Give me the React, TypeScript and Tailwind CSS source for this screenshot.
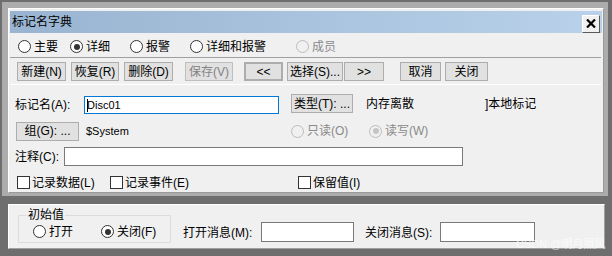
import React from 'react';

// little win32-style pieces
function Radio({ checked = false, disabled = false }: { checked?: boolean; disabled?: boolean }) {
  return (
    <span
      className={
        'flex h-[13px] w-[13px] shrink-0 items-center justify-center rounded-full border ' +
        (disabled ? 'border-[#bcbcbc] bg-[#f0f0f0]' : 'border-[#333333] bg-white')
      }
    >
      {checked && (
        <span className={'h-[6px] w-[6px] rounded-full ' + (disabled ? 'bg-[#c4c4c4]' : 'bg-[#333333]')} />
      )}
    </span>
  );
}

function RadioItem({ label, w, checked, disabled }: { label: string; w: string; checked?: boolean; disabled?: boolean }) {
  return (
    <div className={'flex items-center gap-[3px] ' + w}>
      <Radio checked={checked} disabled={disabled} />
      <span className={disabled ? 'text-[#8a8a8a]' : ''}>{label}</span>
    </div>
  );
}

function Check({ label, w }: { label: string; w: string }) {
  return (
    <div className={'flex items-center gap-[2px] ' + w}>
      <span className="h-[13px] w-[13px] shrink-0 border border-[#333333] bg-white" />
      <span>{label}</span>
    </div>
  );
}

function Btn({ children, className = '' }: { children: React.ReactNode; className?: string }) {
  return (
    <div
      className={
        'flex h-[19px] shrink-0 items-center justify-center border border-[#adadad] bg-[#e1e1e1] ' + className
      }
    >
      {children}
    </div>
  );
}

export default function App() {
  return (
    <div className="relative h-[256px] w-[612px] overflow-hidden bg-[#6e6e6e] pl-[2px] pt-[2px] font-[family-name:'Liberation_Sans','Noto_Sans_CJK_SC',sans-serif] text-[12px] leading-[14px] text-black">
      {/* dialog window */}
      <div className="w-[606px] bg-[#acacac] pb-[3px] pl-[6px] pr-[4px] pt-[6px]">
        <div className="border-x border-b border-t border-b-[#9a9a9a] border-l-white border-r-[#9a9a9a] border-t-white bg-[#f0f0f0] px-px pt-[2px]">
          {/* title bar */}
          <div className="flex h-[22px] items-center justify-between bg-gradient-to-r from-[#99b4d1] to-[#b9d1ea] pl-[2px] pr-[2px]">
            <span>标记名字典</span>
            <div className="mt-[3px] flex h-[18px] w-[18px] items-center justify-center border border-b-[#5a5a5a] border-l-white border-r-[#5a5a5a] border-t-white bg-[#f0f0f0]">
              <svg width="10" height="9" viewBox="0 0 10 9">
                <path d="M1 0.5 L9 8.5 M9 0.5 L1 8.5" stroke="#000" strokeWidth="2.2" />
              </svg>
            </div>
          </div>

          {/* body */}
          <div className="flex h-[159px] flex-col">
            <div className="mt-[7px] flex h-[13px] items-center pl-[8px]">
              <RadioItem label="主要" w="w-[52px]" />
              <RadioItem label="详细" w="w-[60px]" checked />
              <RadioItem label="报警" w="w-[60px]" />
              <RadioItem label="详细和报警" w="w-[106px]" />
              <RadioItem label="成员" w="w-[60px]" disabled />
            </div>

            <div className="mt-[4px] flex w-[591px] border-b border-t border-b-white border-t-[#a0a0a0] pb-[3px] pl-[7px] pt-[4px]">
              <Btn className="w-[49px]">新建(N)</Btn>
              <Btn className="ml-[5px] w-[48px]">恢复(R)</Btn>
              <Btn className="ml-[5px] w-[49px]">删除(D)</Btn>
              <Btn className="ml-[12px] w-[48px] border-[#bfbfbf] bg-[#cccccc] text-[#838383]">保存(V)</Btn>
              <Btn className="ml-[11px] w-[39px] border-2 border-[#0078d7]">&lt;&lt;</Btn>
              <Btn className="ml-[4px] w-[56px]">选择(S)...</Btn>
              <Btn className="ml-[1px] w-[40px]">&gt;&gt;</Btn>
              <Btn className="ml-[16px] w-[41px]">取消</Btn>
              <Btn className="ml-[4px] w-[43px]">关闭</Btn>
            </div>

            <div className="mt-[9px] flex h-[20px] items-start pl-[5px]">
              <span className="mt-[4px] w-[69px]">标记名(A):</span>
              <div className="mt-[2px] flex h-[18px] w-[195px] items-center border border-[#0078d7] bg-white pl-[2px]">
                <span className="mr-[-1px] h-[13px] w-px bg-black" />
                <span className="text-[11px]">Disc01</span>
              </div>
              <Btn className="ml-[12px] h-[18px] w-[62px]">类型(T): ...</Btn>
              <span className="ml-[13px] mt-[3px] w-[119px]">内存离散</span>
              <span className="mt-[3px]">]本地标记</span>
            </div>

            <div className="mt-[8px] flex h-[18px] items-center pl-[6px]">
              <Btn className="h-[18px] w-[63px]">组(G): ...</Btn>
              <span className="ml-[7px] w-[205px] text-[11px]">$System</span>
              <RadioItem label="只读(O)" w="w-[78px]" disabled />
              <RadioItem label="读写(W)" w="w-[80px]" checked disabled />
            </div>

            <div className="mt-[7px] flex h-[19px] items-center pl-[5px]">
              <span className="w-[49px]">注释(C):</span>
              <div className="h-[19px] w-[399px] border border-[#7a7a7a] bg-white" />
            </div>

            <div className="mt-[10px] flex h-[13px] items-center pl-[7px]">
              <Check label="记录数据(L)" w="w-[93px]" />
              <Check label="记录事件(E)" w="w-[188px]" />
              <Check label="保留值(I)" w="w-[80px]" />
            </div>
          </div>
        </div>
      </div>

      {/* lower panel */}
      <div className="ml-[6px] mt-[8px] flex h-[45px] w-[597px] items-start border border-b-[#a0a0a0] border-l-white border-r-[#a0a0a0] border-t-white bg-[#f0f0f0]">
        <fieldset className="ml-[9px] mt-[3px] w-[153px] border border-[#dcdcdc] pb-[4px] pl-[14px]">
          <legend className="ml-[-6px] px-px">初始值</legend>
          <div className="mt-[3px] flex h-[13px] items-center">
            <RadioItem label="打开" w="w-[68px]" />
            <RadioItem label="关闭(F)" w="w-[60px]" checked />
          </div>
        </fieldset>
        <span className="ml-[12px] mt-[21px] w-[78px]">打开消息(M):</span>
        <div className="mt-[17px] h-[20px] w-[93px] border border-[#7a7a7a] bg-white" />
        <span className="ml-[11px] mt-[21px] w-[75px]">关闭消息(S):</span>
        <div className="mt-[17px] h-[20px] w-[95px] border border-[#7a7a7a] bg-white" />
      </div>

      <span className="absolute left-[516px] top-[238px] text-[11px] leading-[12px] text-white/70">CSDN @明月照风</span>
    </div>
  );
}
